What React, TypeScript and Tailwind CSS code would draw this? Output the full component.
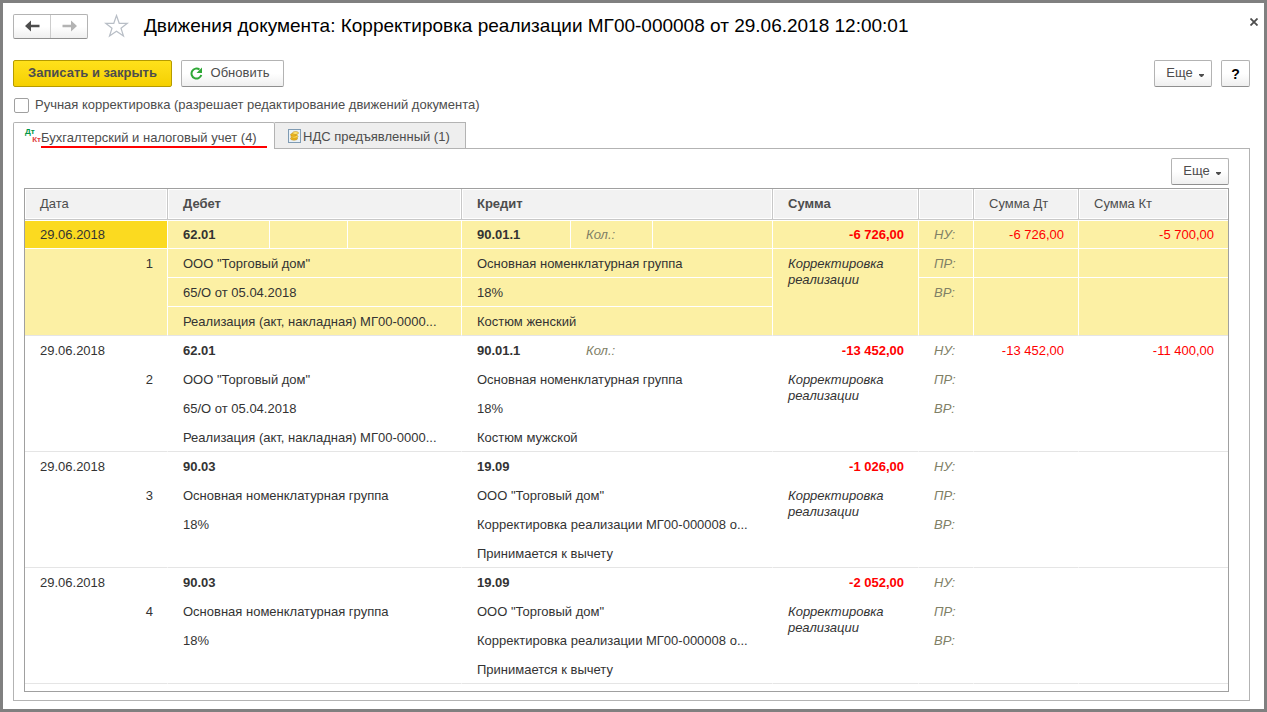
interface Entry {
  debit: string[];
  credit: string[];
  quantity: boolean;
  sum: string;
  sumDt: string;
  sumKt: string;
}

const DATE = "29.06.2018";

const entries: Entry[] = [
  {
    debit: ["62.01", 'ООО "Торговый дом"', "65/О от 05.04.2018", "Реализация (акт, накладная) МГ00-0000..."],
    credit: ["90.01.1", "Основная номенклатурная группа", "18%", "Костюм женский"],
    quantity: true,
    sum: "-6 726,00",
    sumDt: "-6 726,00",
    sumKt: "-5 700,00",
  },
  {
    debit: ["62.01", 'ООО "Торговый дом"', "65/О от 05.04.2018", "Реализация (акт, накладная) МГ00-0000..."],
    credit: ["90.01.1", "Основная номенклатурная группа", "18%", "Костюм мужской"],
    quantity: true,
    sum: "-13 452,00",
    sumDt: "-13 452,00",
    sumKt: "-11 400,00",
  },
  {
    debit: ["90.03", "Основная номенклатурная группа", "18%", ""],
    credit: ["19.09", 'ООО "Торговый дом"', "Корректировка реализации МГ00-000008 о...", "Принимается к вычету"],
    quantity: false,
    sum: "-1 026,00",
    sumDt: "",
    sumKt: "",
  },
  {
    debit: ["90.03", "Основная номенклатурная группа", "18%", ""],
    credit: ["19.09", 'ООО "Торговый дом"', "Корректировка реализации МГ00-000008 о...", "Принимается к вычету"],
    quantity: false,
    sum: "-2 052,00",
    sumDt: "",
    sumKt: "",
  },
];

const button =
  "flex items-center justify-center h-[27px] rounded-xs border border-[#b3b3b3] border-b-[#8f8f8f] bg-linear-to-b from-white from-50% to-[#efefef] text-[#4d4d4d]";

function MoreButton() {
  return (
    <button type="button" className={`${button} gap-[6px] w-[58px] pl-1 pb-px`}>
      Еще
      <svg width="5" height="3" viewBox="0 0 5 3" className="mt-1" aria-hidden="true">
        <path d="M0 0H5V1L3 3H2L0 1Z" fill="#4d4d4d" />
      </svg>
    </button>
  );
}

function Arrow({ flip = false }: { flip?: boolean }) {
  return (
    <svg width="15" height="12" viewBox="0 0 15 12" className={flip ? "-scale-x-100" : ""} aria-hidden="true">
      <path d="M0 6L6 0.500V4.700H14.500V7.300H6V11.500Z" fill="currentColor" />
    </svg>
  );
}

function CoinsIcon() {
  return (
    <svg width="14" height="14" viewBox="0 0 14 14" aria-hidden="true">
      <rect x="0.500" y="0.500" width="12" height="13" fill="#e9f1f8" stroke="#7f9bb3" />
      <ellipse cx="6" cy="9.500" rx="3.500" ry="1.700" fill="#f0b81c" stroke="#b57f0c" strokeWidth="0.500" />
      <ellipse cx="6.500" cy="7.500" rx="3.500" ry="1.700" fill="#ffd94a" stroke="#b57f0c" strokeWidth="0.500" />
      <ellipse cx="5.500" cy="5.800" rx="3" ry="1.500" fill="#f0b81c" stroke="#b57f0c" strokeWidth="0.500" />
      <ellipse cx="7.500" cy="4" rx="3" ry="1.500" fill="#ffe36b" stroke="#b57f0c" strokeWidth="0.500" />
    </svg>
  );
}

function EntryRows({ entry, index }: { entry: Entry; index: number }) {
  const selected = index === 0;
  const fill = selected ? "bg-[#fcf0a4]" : "bg-white";
  const base = "h-[29px] pt-[2px] pl-[15px] pr-[14px] border-r border-b border-white whitespace-nowrap overflow-hidden";
  const cell = `${base} ${fill}`;
  const top = `${cell} ${selected ? "shadow-[inset_0_1px_0_#ffffff]" : ""}`;
  const date = selected ? `${base} bg-[#fbda20] shadow-[inset_0_1px_0_#ffffff]` : cell;
  const tall = `${fill} pt-[7px] pl-[15px] pr-[14px] align-top border-r border-b border-white border-b-[#e5e5e5]`;
  const last = `${cell} border-b-[#e5e5e5]`;
  const hint = "italic text-[#808066]";

  return (
    <tbody>
      <tr>
        <td className={date}>{DATE}</td>
        <td className={`${top} font-bold`}>{entry.debit[0]}</td>
        <td className={top}></td>
        <td className={top}></td>
        <td className={`${top} font-bold`}>{entry.credit[0]}</td>
        <td className={`${top} ${hint}`}>{entry.quantity ? "Кол.:" : ""}</td>
        <td className={top}></td>
        <td className={`${top} text-right font-bold text-[#ff0000]`}>{entry.sum}</td>
        <td className={`${top} ${hint}`}>НУ:</td>
        <td className={`${top} text-right text-[#ff0000]`}>{entry.sumDt}</td>
        <td className={`${top} border-r-0 text-right text-[#ff0000]`}>{entry.sumKt}</td>
      </tr>
      <tr>
        <td rowSpan={3} className={`${tall} text-right`}>{index + 1}</td>
        <td colSpan={3} className={cell}>{entry.debit[1]}</td>
        <td colSpan={3} className={cell}>{entry.credit[1]}</td>
        <td rowSpan={3} className={`${tall} italic`}>
          Корректировка
          <br />
          реализации
        </td>
        <td className={`${cell} ${hint}`}>ПР:</td>
        <td className={cell}></td>
        <td className={`${cell} border-r-0`}></td>
      </tr>
      <tr>
        <td colSpan={3} className={cell}>{entry.debit[2]}</td>
        <td colSpan={3} className={cell}>{entry.credit[2]}</td>
        <td rowSpan={2} className={`${tall} ${hint}`}>ВР:</td>
        <td rowSpan={2} className={tall}></td>
        <td rowSpan={2} className={`${tall} border-r-0`}></td>
      </tr>
      <tr>
        <td colSpan={3} className={last}>{entry.debit[3]}</td>
        <td colSpan={3} className={last}>{entry.credit[3]}</td>
      </tr>
    </tbody>
  );
}

function EntriesTable() {
  const head =
    "h-[31px] px-[15px] bg-[#f2f2f2] border-r border-b border-[#c8c8c8] text-left text-[#4d4d4d] shadow-[inset_0_0_0_1px_#ffffff]";

  return (
    <table className="w-full table-fixed border-separate border-spacing-0">
      <colgroup>
        <col className="w-[143px]" />
        <col className="w-[102px]" />
        <col className="w-[78px]" />
        <col />
        <col className="w-[109px]" />
        <col className="w-[82px]" />
        <col className="w-[120px]" />
        <col className="w-[146px]" />
        <col className="w-[55px]" />
        <col className="w-[105px]" />
        <col className="w-[149px]" />
      </colgroup>
      <thead>
        <tr>
          <th className={`${head} font-normal`}>Дата</th>
          <th colSpan={3} className={head}>Дебет</th>
          <th colSpan={3} className={head}>Кредит</th>
          <th className={head}>Сумма</th>
          <th className={head}></th>
          <th className={`${head} font-normal`}>Сумма Дт</th>
          <th className={`${head} border-r-0 font-normal`}>Сумма Кт</th>
        </tr>
      </thead>
      {entries.map((entry, i) => (
        <EntryRows key={i} entry={entry} index={i} />
      ))}
    </table>
  );
}

export default function App() {
  return (
    <div className="min-h-screen flex flex-col border-3 border-[#808080] bg-white pl-[10px] pt-[10px] pb-2 pr-[14px] font-['Liberation_Sans',Arial,sans-serif] text-[13px] leading-4 text-[#333333]">
      {/* Title bar */}
      <header className="flex items-center h-[26px]">
        <div className="flex h-[25px] w-[75px] rounded-xs border border-[#b3b3b3] border-b-[#8f8f8f] bg-linear-to-b from-white from-50% to-[#efefef]">
          <button type="button" aria-label="Назад" className="flex flex-1 items-center justify-center border-r border-[#cccccc] text-[#4d4d4d]">
            <Arrow />
          </button>
          <button type="button" aria-label="Вперед" className="flex flex-1 items-center justify-center text-[#b3b3b3]">
            <Arrow flip />
          </button>
        </div>
        <button type="button" aria-label="Избранное" className="ml-4">
          <svg width="25" height="24" viewBox="0 0 25 24" fill="none" stroke="#b8bec6" strokeWidth="1.200" aria-hidden="true">
            <path d="M12.500 1.500L15.200 9.300H23.300L17 14.200L19.500 22L12.500 17.300L5.500 22L8 14.200L1.700 9.300H9.800Z" />
          </svg>
        </button>
        <h1 className="ml-[15px] text-[19px] leading-6 text-black">
          Движения документа: Корректировка реализации МГ00-000008 от 29.06.2018 12:00:01
        </h1>
        <button type="button" aria-label="Закрыть" className="ml-auto -mr-3 mb-2 p-1 text-[#4d4d4d]">
          <svg width="8" height="8" viewBox="0 0 8 8" stroke="currentColor" strokeWidth="1.800" aria-hidden="true">
            <path d="M0.500 0.500L7.500 7.500M7.500 0.500L0.500 7.500" />
          </svg>
        </button>
      </header>

      {/* Commands */}
      <div className="mt-[21px] flex">
        <button
          type="button"
          className="h-[27px] w-[159px] rounded-xs border border-[#b59b00] bg-linear-to-b from-[#ffe11a] to-[#f5d000] pb-px font-bold text-[#4d4d4d]"
        >
          Записать и закрыть
        </button>
        <button type="button" className={`${button} ml-[9px] w-[103px] gap-2 pr-[6px] pb-px`}>
          <svg width="13" height="13" viewBox="0 0 13 13" aria-hidden="true">
            <path d="M9.500 2.500A5 5 0 1 0 11.300 8" fill="none" stroke="#2ea836" strokeWidth="2" />
            <path d="M12 0.500V6H6.500Z" fill="#2ea836" />
          </svg>
          Обновить
        </button>
        <div className="ml-auto flex gap-[9px]">
          <MoreButton />
          <button type="button" className={`${button} w-[29px] text-[14px] font-bold text-black`}>
            ?
          </button>
        </div>
      </div>

      <label className="mt-[10px] flex items-center gap-[6px] text-[#4d4d4d]">
        <input type="checkbox" className="ml-px size-[15px] appearance-none rounded-xs border border-[#a0a0a0] bg-white" />
        Ручная корректировка (разрешает редактирование движений документа)
      </label>

      {/* Tabs */}
      <div role="tablist" className="mt-[9px] -mb-px flex text-[#4d4d4d]">
        <button type="button" role="tab" aria-selected="true" className="relative flex h-[27px] w-[262px] items-center rounded-t-xs border border-b-0 border-[#b3b3b3] bg-white pl-[11px]">
          <span className="flex w-4 flex-col text-left text-[8px] leading-[8px] font-bold">
            <span className="text-[#009646]">Дт</span>
            <span className="self-end text-[#e04040]">Кт</span>
          </span>
          <span className="mt-px border-b-2 border-[#ff0000] pt-1 pr-[10px]">Бухгалтерский и налоговый учет (4)</span>
        </button>
        <button type="button" role="tab" aria-selected="false" className="flex h-[27px] w-[191px] items-center gap-px border border-l-0 border-[#b3b3b3] bg-[#eeeeee] pl-[13px]">
          <CoinsIcon />
          <span className="pt-[3px]">НДС предъявленный (1)</span>
        </button>
      </div>

      <main className="grow border border-[#b3b3b3] pl-[10px] pr-5 pt-[9px] pb-2">
        <div className="mb-[3px] flex justify-end">
          <MoreButton />
        </div>
        <div className="border border-[#a0a0a0] pb-[7px]">
          <EntriesTable />
        </div>
      </main>
    </div>
  );
}
